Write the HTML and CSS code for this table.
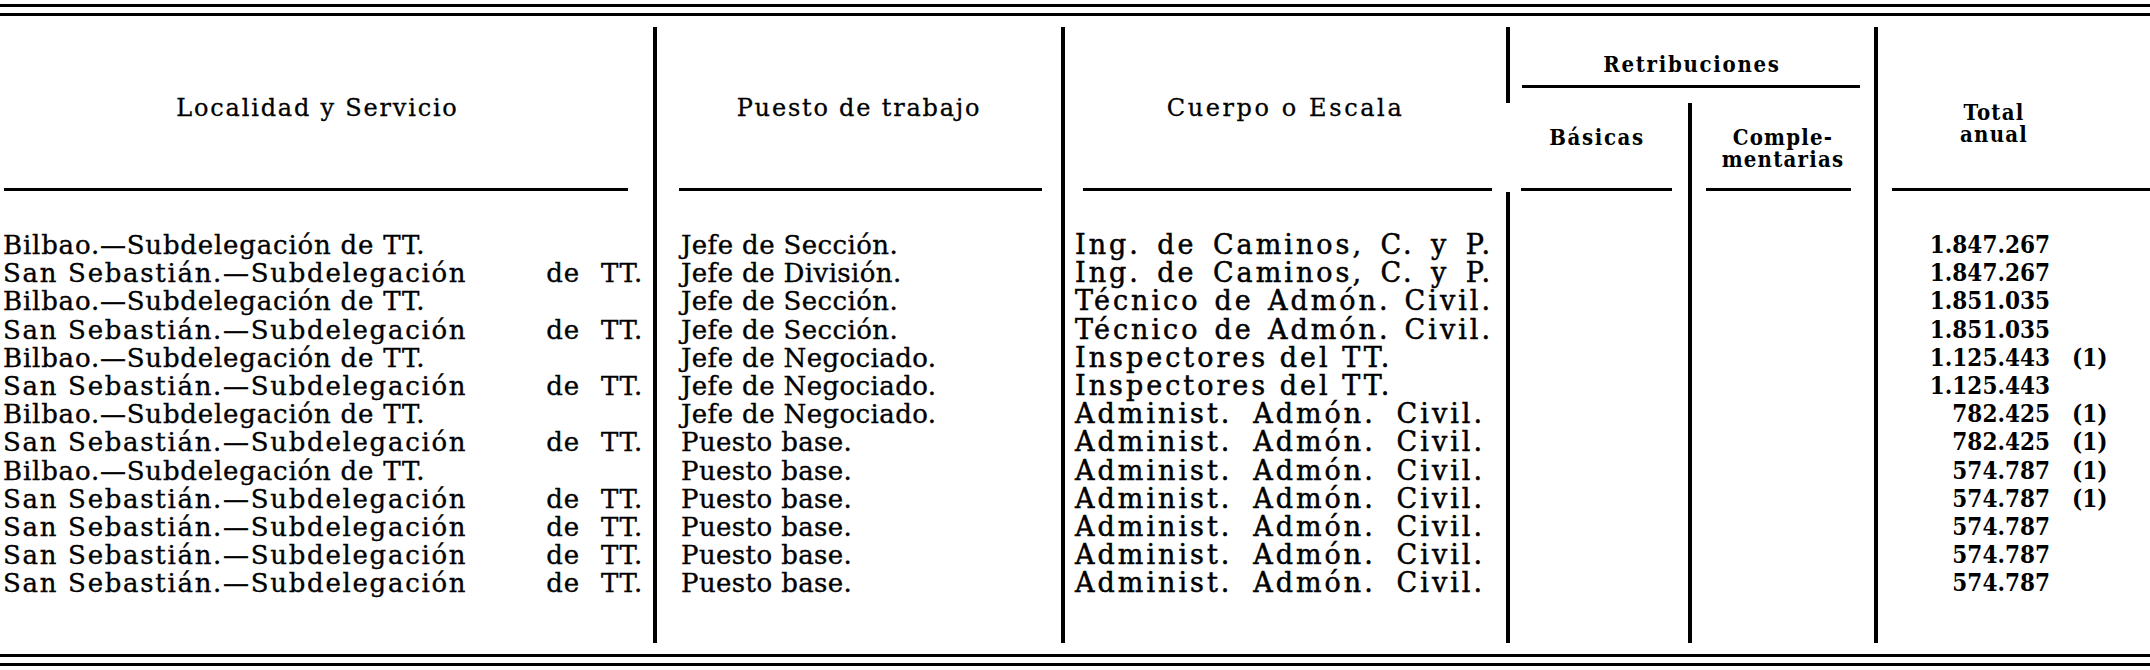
FILE: index.html
```html
<!DOCTYPE html>
<html lang="es">
<head>
<meta charset="utf-8">
<title>Relación de puestos de trabajo</title>
<link rel="stylesheet" href="styles.css">
</head>
<body>
<div class="page">
  <div class="double-rule top"></div>
  <div class="table">
    <div class="hcell h-loc">
      <div class="htext">Localidad y Servicio</div>
      <div class="hrule"></div>
    </div>
    <div class="hcell h-pue vl">
      <div class="htext">Puesto de trabajo</div>
      <div class="hrule"></div>
    </div>
    <div class="hcell h-cue vl">
      <div class="htext">Cuerpo o Escala</div>
      <div class="hrule"></div>
    </div>
    <div class="hcell h-ret vl">
      <div class="htext bold">Retribuciones</div>
      <div class="hrule"></div>
    </div>
    <div class="hcell h-bas">
      <div class="htext bold">Básicas</div>
      <div class="hrule"></div>
    </div>
    <div class="hcell h-com vl">
      <div class="htext bold two">Comple-<br>mentarias</div>
      <div class="hrule"></div>
    </div>
    <div class="hcell h-tot vl">
      <div class="htext bold two">Total<br>anual</div>
      <div class="hrule"></div>
    </div>

    <div class="bcell b-loc">
      <div>Bilbao.—Subdelegación de TT.</div>
      <div class="spread"><span class="head">San Sebastián.—Subdelegación</span><span class="tail">de TT.</span></div>
      <div>Bilbao.—Subdelegación de TT.</div>
      <div class="spread"><span class="head">San Sebastián.—Subdelegación</span><span class="tail">de TT.</span></div>
      <div>Bilbao.—Subdelegación de TT.</div>
      <div class="spread"><span class="head">San Sebastián.—Subdelegación</span><span class="tail">de TT.</span></div>
      <div>Bilbao.—Subdelegación de TT.</div>
      <div class="spread"><span class="head">San Sebastián.—Subdelegación</span><span class="tail">de TT.</span></div>
      <div>Bilbao.—Subdelegación de TT.</div>
      <div class="spread"><span class="head">San Sebastián.—Subdelegación</span><span class="tail">de TT.</span></div>
      <div class="spread"><span class="head">San Sebastián.—Subdelegación</span><span class="tail">de TT.</span></div>
      <div class="spread"><span class="head">San Sebastián.—Subdelegación</span><span class="tail">de TT.</span></div>
      <div class="spread"><span class="head">San Sebastián.—Subdelegación</span><span class="tail">de TT.</span></div>
    </div>
    <div class="bcell b-pue vl">
      <div>Jefe de Sección.</div>
      <div>Jefe de División.</div>
      <div>Jefe de Sección.</div>
      <div>Jefe de Sección.</div>
      <div>Jefe de Negociado.</div>
      <div>Jefe de Negociado.</div>
      <div>Jefe de Negociado.</div>
      <div>Puesto base.</div>
      <div>Puesto base.</div>
      <div>Puesto base.</div>
      <div>Puesto base.</div>
      <div>Puesto base.</div>
      <div>Puesto base.</div>
    </div>
    <div class="bcell b-cue vl">
      <div class="j">Ing. de Caminos, C. y P.</div>
      <div class="j">Ing. de Caminos, C. y P.</div>
      <div class="j">Técnico de Admón. Civil.</div>
      <div class="j">Técnico de Admón. Civil.</div>
      <div>Inspectores del TT.</div>
      <div>Inspectores del TT.</div>
      <div class="j j2">Administ. Admón. Civil.</div>
      <div class="j j2">Administ. Admón. Civil.</div>
      <div class="j j2">Administ. Admón. Civil.</div>
      <div class="j j2">Administ. Admón. Civil.</div>
      <div class="j j2">Administ. Admón. Civil.</div>
      <div class="j j2">Administ. Admón. Civil.</div>
      <div class="j j2">Administ. Admón. Civil.</div>
    </div>
    <div class="bcell b-bas vl"></div>
    <div class="bcell b-com vl"></div>
    <div class="bcell b-tot vl">
      <div class="trow"><span class="num">1.847.267</span></div>
      <div class="trow"><span class="num">1.847.267</span></div>
      <div class="trow"><span class="num">1.851.035</span></div>
      <div class="trow"><span class="num">1.851.035</span></div>
      <div class="trow"><span class="num">1.125.443</span><span class="note">(1)</span></div>
      <div class="trow"><span class="num">1.125.443</span></div>
      <div class="trow"><span class="num">782.425</span><span class="note">(1)</span></div>
      <div class="trow"><span class="num">782.425</span><span class="note">(1)</span></div>
      <div class="trow"><span class="num">574.787</span><span class="note">(1)</span></div>
      <div class="trow"><span class="num">574.787</span><span class="note">(1)</span></div>
      <div class="trow"><span class="num">574.787</span></div>
      <div class="trow"><span class="num">574.787</span></div>
      <div class="trow"><span class="num">574.787</span></div>
    </div>
  </div>
  <div class="double-rule bottom"></div>
</div>
</body>
</html>
```

FILE: styles.css
```css
html, body {
  margin: 0;
  padding: 0;
  background: #fff;
}

body {
  color: #000;
  font-family: "DejaVu Serif", "Liberation Serif", serif;
}

.page {
  width: 2150px;
}

.double-rule {
  height: 6px;
  border-top: 3px solid #000;
  border-bottom: 3px solid #000;
}

.double-rule.top {
  margin-top: 4px;
  margin-bottom: 11px;
}

.double-rule.bottom {
  margin-top: 11px;
}

.table {
  display: grid;
  grid-template-columns: 653px 408px 445px 182px 186px 276px;
  grid-template-rows: 76px 89px 451px;
}

.vl {
  border-left: 4px solid #000;
}

.hcell,
.bcell {
  box-sizing: border-box;
  min-width: 0;
}

.hcell {
  display: flex;
  flex-direction: column;
}

.htext {
  flex: 1;
  display: flex;
  align-items: center;
  justify-content: center;
  text-align: center;
  font-size: 24px;
  letter-spacing: 1.8px;
  -webkit-text-stroke: 0.3px #000;
}

.htext.bold {
  font-family: "DejaVu Serif Condensed", "DejaVu Serif", serif;
  font-weight: bold;
  font-size: 22px;
  letter-spacing: 1.2px;
  -webkit-text-stroke: 0;
}

.htext.two {
  line-height: 22px;
}

.hrule {
  height: 3px;
  background: #000;
  flex: none;
  margin-bottom: 1px;
}

.h-loc { grid-column: 1; grid-row: 1 / 3; }
.h-loc .htext { padding-right: 18px; }
.h-loc .hrule { margin-left: 4px; margin-right: 25px; }

.h-pue { grid-column: 2; grid-row: 1 / 3; }
.h-pue .hrule { margin-left: 22px; margin-right: 19px; }

.h-cue { grid-column: 3; grid-row: 1 / 3; }
.h-cue .htext { letter-spacing: 2.6px; }
.h-cue .hrule { margin-left: 18px; margin-right: 14px; }

.h-ret { grid-column: 4 / 6; grid-row: 1; }
.h-ret .htext { flex: none; height: 42px; margin-top: 16px; letter-spacing: 1.7px; }
.h-ret .hrule { margin: 0 14px 0 12px; }

.h-bas { grid-column: 4; grid-row: 2; }
.h-bas .htext { padding-bottom: 17px; letter-spacing: 1.6px; }
.h-bas .hrule { margin-left: 15px; margin-right: 16px; }

.h-com { grid-column: 5; grid-row: 2; }
.h-com .htext { padding-top: 5px; }
.h-com .hrule { margin-left: 14px; margin-right: 23px; }

.h-tot { grid-column: 6; grid-row: 1 / 3; }
.h-tot .htext { padding-top: 30px; padding-right: 40px; }
.h-tot .hrule { margin-left: 14px; margin-right: 0; }

.bcell {
  grid-row: 3;
  padding-top: 39px;
  font-size: 26px;
  line-height: 28.2px;
  letter-spacing: 0.4px;
  -webkit-text-stroke: 0.35px #000;
}

.b-loc { grid-column: 1; padding-left: 3px; padding-right: 10px; letter-spacing: 0.8px; }
.b-pue { grid-column: 2; padding-left: 24px; }
.b-cue { grid-column: 3; padding-left: 10px; padding-right: 13px; font-size: 27px; letter-spacing: 3px; -webkit-text-stroke: 0.5px #000; }
.b-bas { grid-column: 4; }
.b-com { grid-column: 5; }
.b-tot { grid-column: 6; }

.spread {
  display: flex;
  justify-content: space-between;
}

.spread .head {
  letter-spacing: 1.7px;
}

.spread .tail {
  word-spacing: 12px;
}

.j {
  text-align: justify;
  text-align-last: justify;
}

.j2 {
  padding-right: 8px;
}

.trow {
  display: flex;
  font-family: "DejaVu Serif Condensed", "DejaVu Serif", serif;
  font-weight: bold;
  font-size: 24px;
  letter-spacing: 0;
  -webkit-text-stroke: 0;
}

.num {
  width: 172px;
  text-align: right;
  flex: none;
}

.note {
  margin-left: 22px;
}
```
